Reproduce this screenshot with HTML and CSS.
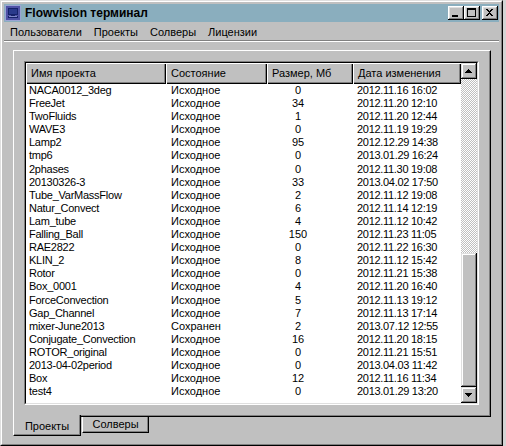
FILE: index.html
```html
<!DOCTYPE html>
<html>
<head>
<meta charset="utf-8">
<link rel="stylesheet" href="styles.css">
</head>
<body>
<div class="window">
  <div class="window-inner">
    <div class="titlebar">
      <svg class="appicon" width="16" height="16" viewBox="0 0 16 16" shape-rendering="crispEdges">
        <rect x="0" y="0" width="16" height="16" fill="#9aa4d4"/>
        <rect x="1" y="1" width="14" height="14" fill="#4f52a6"/>
        <rect x="3" y="3" width="10" height="7" fill="#16226a"/>
        <rect x="4" y="4" width="8" height="5" fill="#2a3a8c"/>
        <rect x="6" y="10" width="4" height="1" fill="#16226a"/>
        <rect x="3" y="11" width="10" height="2" fill="#16226a"/>
        <rect x="4" y="11" width="8" height="1" fill="#7f88c8"/>
      </svg>
      <span class="title">Flowvision терминал</span>
      <div class="tbtns">
        <div class="tbtn"><svg width="16" height="14" viewBox="0 0 16 14" shape-rendering="crispEdges"><rect x="4" y="9" width="6" height="2" fill="#000"/></svg></div>
        <div class="tbtn"><svg width="16" height="14" viewBox="0 0 16 14" shape-rendering="crispEdges"><rect x="3" y="2" width="9" height="9" fill="#000"/><rect x="4" y="4" width="7" height="6" fill="#c0c0c0"/></svg></div>
        <div class="tbtn close"><svg width="16" height="14" viewBox="0 0 16 14" shape-rendering="crispEdges"><path d="M4 3h2v1h1v1h1v-1h1v-1h2v1h-1v1h-1v1h-1v1h1v1h1v1h1v1h-2v-1h-1v-1h-1v1h-1v1h-2v-1h1v-1h1v-1h1v-1h-1v-1h-1v-1h-1z" fill="#000"/></svg></div>
      </div>
    </div>
    <div class="menubar">
      <span class="menuitem">Пользователи</span>
      <span class="menuitem">Проекты</span>
      <span class="menuitem">Солверы</span>
      <span class="menuitem">Лицензии</span>
    </div>
    <div class="client">
      <div class="panel">
        <div class="listbox">
          <div class="listbox-inner">
            <div class="listmain">
              <div class="header">
                <div class="hcell">Имя проекта</div>
                <div class="hcell">Состояние</div>
                <div class="hcell">Размер, Мб</div>
                <div class="hcell">Дата изменения</div>
              </div>
              <div class="rows">
                <div class="row"><span class="c1">NACA0012_3deg</span><span class="c2">Исходное</span><span class="c3">0</span><span class="c4">2012.11.16 16:02</span></div>
                <div class="row"><span class="c1">FreeJet</span><span class="c2">Исходное</span><span class="c3">34</span><span class="c4">2012.11.20 12:10</span></div>
                <div class="row"><span class="c1">TwoFluids</span><span class="c2">Исходное</span><span class="c3">1</span><span class="c4">2012.11.20 12:44</span></div>
                <div class="row"><span class="c1">WAVE3</span><span class="c2">Исходное</span><span class="c3">0</span><span class="c4">2012.11.19 19:29</span></div>
                <div class="row"><span class="c1">Lamp2</span><span class="c2">Исходное</span><span class="c3">95</span><span class="c4">2012.12.29 14:38</span></div>
                <div class="row"><span class="c1">tmp6</span><span class="c2">Исходное</span><span class="c3">0</span><span class="c4">2013.01.29 16:24</span></div>
                <div class="row"><span class="c1">2phases</span><span class="c2">Исходное</span><span class="c3">0</span><span class="c4">2012.11.30 19:08</span></div>
                <div class="row"><span class="c1">20130326-3</span><span class="c2">Исходное</span><span class="c3">33</span><span class="c4">2013.04.02 17:50</span></div>
                <div class="row"><span class="c1">Tube_VarMassFlow</span><span class="c2">Исходное</span><span class="c3">2</span><span class="c4">2012.11.12 19:08</span></div>
                <div class="row"><span class="c1">Natur_Convect</span><span class="c2">Исходное</span><span class="c3">6</span><span class="c4">2012.11.14 12:19</span></div>
                <div class="row"><span class="c1">Lam_tube</span><span class="c2">Исходное</span><span class="c3">4</span><span class="c4">2012.11.12 10:42</span></div>
                <div class="row"><span class="c1">Falling_Ball</span><span class="c2">Исходное</span><span class="c3">150</span><span class="c4">2012.11.23 11:05</span></div>
                <div class="row"><span class="c1">RAE2822</span><span class="c2">Исходное</span><span class="c3">0</span><span class="c4">2012.11.22 16:30</span></div>
                <div class="row"><span class="c1">KLIN_2</span><span class="c2">Исходное</span><span class="c3">8</span><span class="c4">2012.11.12 15:42</span></div>
                <div class="row"><span class="c1">Rotor</span><span class="c2">Исходное</span><span class="c3">0</span><span class="c4">2012.11.21 15:38</span></div>
                <div class="row"><span class="c1">Box_0001</span><span class="c2">Исходное</span><span class="c3">4</span><span class="c4">2012.11.20 16:40</span></div>
                <div class="row"><span class="c1">ForceConvection</span><span class="c2">Исходное</span><span class="c3">5</span><span class="c4">2012.11.13 19:12</span></div>
                <div class="row"><span class="c1">Gap_Channel</span><span class="c2">Исходное</span><span class="c3">7</span><span class="c4">2012.11.13 17:14</span></div>
                <div class="row"><span class="c1">mixer-June2013</span><span class="c2">Сохранен</span><span class="c3">2</span><span class="c4">2013.07.12 12:55</span></div>
                <div class="row"><span class="c1">Conjugate_Convection</span><span class="c2">Исходное</span><span class="c3">16</span><span class="c4">2012.11.20 18:15</span></div>
                <div class="row"><span class="c1">ROTOR_original</span><span class="c2">Исходное</span><span class="c3">0</span><span class="c4">2012.11.21 15:51</span></div>
                <div class="row"><span class="c1">2013-04-02period</span><span class="c2">Исходное</span><span class="c3">0</span><span class="c4">2013.04.03 11:42</span></div>
                <div class="row"><span class="c1">Box</span><span class="c2">Исходное</span><span class="c3">12</span><span class="c4">2012.11.16 11:34</span></div>
                <div class="row"><span class="c1">test4</span><span class="c2">Исходное</span><span class="c3">0</span><span class="c4">2013.01.29 13:20</span></div>
              </div>
            </div>
            <div class="scrollbar">
              <div class="sbtn"><svg width="16" height="16" viewBox="0 0 16 16" shape-rendering="crispEdges"><path d="M7 6h1v1h1v1h1v1h1v1h-7v-1h1v-1h1v-1h1z" fill="#000"/></svg></div>
              <div class="track"></div>
              <div class="thumb"></div>
              <div class="sbtn"><svg width="16" height="16" viewBox="0 0 16 16" shape-rendering="crispEdges"><path d="M4 6h7v1h-1v1h-1v1h-1v1h-1v-1h-1v-1h-1v-1h-1z" fill="#000"/></svg></div>
            </div>
          </div>
        </div>
      </div>
      <div class="tabs">
        <div class="tab active">Проекты</div>
        <div class="tab">Солверы</div>
      </div>
    </div>
  </div>
</div>
</body>
</html>
```
FILE: styles.css
```css
* { box-sizing: border-box; }
html, body { margin: 0; padding: 0; }
body {
  width: 506px;
  height: 446px;
  overflow: hidden;
  background: #d4d4d4;
  font-family: "Liberation Sans", Arial, sans-serif;
  font-size: 11px;
  color: #000;
}
.window {
  width: 503px;
  height: 446px;
  background: #c0c0c0;
  border: 1px solid;
  border-color: #dfdfdf #000 #000 #dfdfdf;
  display: flex;
  flex-direction: column;
}
.window-inner {
  flex: 1;
  border: 1px solid;
  border-color: #fff #808080 #808080 #fff;
  padding: 2px;
  display: flex;
  flex-direction: column;
}
.titlebar {
  height: 18px;
  background: #8aaebe;
  display: flex;
  align-items: center;
  padding: 0 1px 0 1px;
}
.appicon { display: block; flex: none; }
.title {
  flex: 1;
  margin-left: 4px;
  font-weight: bold;
  font-size: 12px;
  white-space: nowrap;
}
.tbtns { display: flex; }
.tbtn {
  width: 16px;
  height: 14px;
  background: #c0c0c0;
  box-shadow: inset -1px -1px #000, inset 1px 1px #fff, inset -2px -2px #808080, inset 2px 2px #dfdfdf;
}
.tbtn svg { display: block; }
.tbtn.close { margin-left: 2px; }
.menubar {
  height: 19px;
  display: flex;
  align-items: center;
  padding-top: 1px;
  border-bottom: 1px solid #808080;
  box-shadow: 0 1px #fff;
}
.menuitem { padding: 0 6px; white-space: nowrap; }
.client {
  flex: 1;
  display: flex;
  flex-direction: column;
  padding: 9px 8px 0 9px;
}
.panel {
  width: 478px;
  height: 367px;
  border: 1px solid;
  border-color: #fff #000 #000 #fff;
  box-shadow: inset -1px -1px #808080;
  padding: 10px 11px 11px 10px;
}
.listbox {
  width: 455px;
  height: 344px;
  border: 1px solid;
  border-color: #808080 #fff #fff #808080;
}
.listbox-inner {
  height: 100%;
  border: 1px solid;
  border-color: #000 #dfdfdf #dfdfdf #000;
  background: #fff;
  display: flex;
}
.listmain { width: 435px; }
.header, .row {
  display: grid;
  grid-template-columns: 140px 101px 86px 108px;
}
.header { height: 21px; }
.hcell {
  background: #c0c0c0;
  box-shadow: inset 1px 1px #fff, inset -1px -1px #000, inset -2px -2px #808080;
  padding-left: 5px;
  line-height: 21px;
  white-space: nowrap;
}
.row {
  height: 13.1px;
  line-height: 13px;
  white-space: nowrap;
}
.c1 { padding-left: 3px; letter-spacing: -0.25px; }
.c2 { padding-left: 5px; }
.c3 { text-align: center; padding-right: 24px; }
.c4 { padding-left: 4px; letter-spacing: -0.3px; }
.scrollbar {
  width: 16px;
  display: flex;
  flex-direction: column;
}
.sbtn, .thumb {
  background: #c0c0c0;
  box-shadow: inset -1px -1px #000, inset 1px 1px #dfdfdf, inset -2px -2px #808080, inset 2px 2px #fff;
}
.sbtn { height: 16px; flex: none; }
.sbtn svg { display: block; }
.track {
  flex: 1;
  background: repeating-conic-gradient(#c0c0c0 0 25%, #fff 0 50%) 0 0 / 2px 2px;
}
.thumb { height: 134px; flex: none; }
.tabs {
  display: flex;
  margin-top: -2px;
  align-items: flex-start;
}
.tab {
  background: #c0c0c0;
  border-left: 1px solid #fff;
  border-right: 1px solid #000;
  border-bottom: 1px solid #000;
  box-shadow: inset -1px -1px #808080;
  text-align: center;
  white-space: nowrap;
}
.tab.active {
  width: 68px;
  height: 21px;
  padding-top: 5px;
  position: relative;
  z-index: 1;
}
.tab:not(.active) {
  width: 67px;
  height: 16px;
  margin-top: 2px;
  margin-left: 1px;
  padding-top: 1px;
}
```
